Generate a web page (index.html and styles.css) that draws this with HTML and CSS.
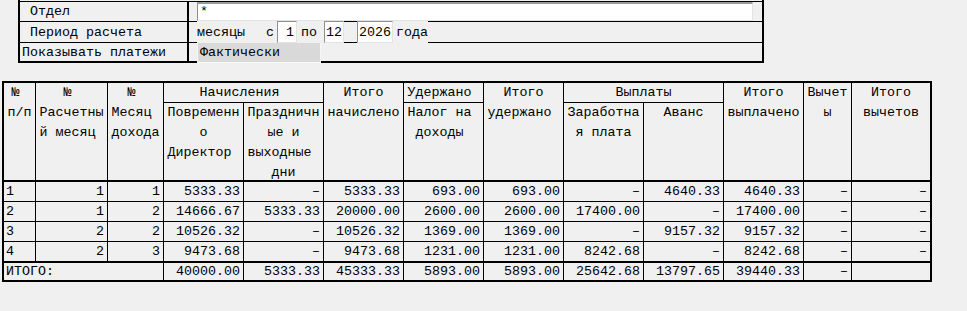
FILE: index.html
```html
<!DOCTYPE html>
<html lang="ru">
<head>
<meta charset="utf-8">
<title>Расчет</title>
<link rel="stylesheet" href="styles.css">
</head>
<body>
<div class="page">
  <div class="form">
    <div class="frow frow-dept">
      <div class="flabel"> Отдел</div>
      <div class="fval"><div class="field field-wide">*</div></div>
    </div>
    <div class="frow frow-period">
      <div class="flabel"> Период расчета</div>
      <div class="fval fval-period">
        <span class="lbl lbl-months">месяцы<span class="sp-c">с</span></span>
        <span class="field field-num field-from">1</span>
        <span class="lbl lbl-to">по</span>
        <span class="field field-num field-till">12</span>
        <span class="field field-num field-year">2026</span>
        <span class="lbl lbl-year">года</span>
      </div>
    </div>
    <div class="frow frow-pay">
      <div class="flabel flabel-flush">Показывать платежи</div>
      <div class="fval"><div class="select">Фактически</div></div>
    </div>
  </div>

  <table class="report">
    <colgroup>
      <col class="w1"><col class="w2"><col class="w3">
      <col class="w80"><col class="w80"><col class="w80"><col class="w80"><col class="w80">
      <col class="w80"><col class="w80"><col class="w80">
      <col class="w12"><col class="w13">
    </colgroup>
    <thead>
      <tr class="hr1">
        <th rowspan="2" class="hs">№ <br>п/п</th>
        <th rowspan="2" class="hs">№ <br>Расчетны<br>й месяц </th>
        <th rowspan="2" class="hs">№ <br>Месяц <br>дохода</th>
        <th colspan="2" class="grp">Начисления </th>
        <th rowspan="2" class="hs">Итого<br>начислено</th>
        <th class="grp">Удержано </th>
        <th rowspan="2" class="hs">Итого<br>удержано </th>
        <th colspan="2" class="grp">Выплаты</th>
        <th rowspan="2" class="hs">Итого<br>выплачено</th>
        <th rowspan="2" class="hs">Вычет<br>ы</th>
        <th rowspan="2" class="hs last">Итого<br>вычетов</th>
      </tr>
      <tr class="hr2">
        <th class="sub"><div class="hbox">Повременн<br>о<br>Директор </div></th>
        <th class="sub"><div class="hbox">Праздничн<br>ые и<br>выходные <br>дни</div></th>
        <th class="sub"><div class="hbox">Налог на <br>доходы </div></th>
        <th class="sub"><div class="hbox">Заработна<br>я плата</div></th>
        <th class="sub"><div class="hbox">Аванс</div></th>
      </tr>
    </thead>
    <tbody>
      <tr>
        <td class="l">1</td><td>1</td><td>1</td><td>5333.33</td><td>–</td><td>5333.33</td><td>693.00</td><td>693.00</td><td>–</td><td>4640.33</td><td>4640.33</td><td>–</td><td class="last">–</td>
      </tr>
      <tr>
        <td class="l">2</td><td>1</td><td>2</td><td>14666.67</td><td>5333.33</td><td>20000.00</td><td>2600.00</td><td>2600.00</td><td>17400.00</td><td>–</td><td>17400.00</td><td>–</td><td class="last">–</td>
      </tr>
      <tr>
        <td class="l">3</td><td>2</td><td>2</td><td>10526.32</td><td>–</td><td>10526.32</td><td>1369.00</td><td>1369.00</td><td>–</td><td>9157.32</td><td>9157.32</td><td>–</td><td class="last">–</td>
      </tr>
      <tr class="row-end">
        <td class="l">4</td><td>2</td><td>3</td><td>9473.68</td><td>–</td><td>9473.68</td><td>1231.00</td><td>1231.00</td><td>8242.68</td><td>–</td><td>8242.68</td><td>–</td><td class="last">–</td>
      </tr>
      <tr class="row-total">
        <td colspan="3" class="l">ИТОГО:</td><td>40000.00</td><td>5333.33</td><td>45333.33</td><td>5893.00</td><td>5893.00</td><td>25642.68</td><td>13797.65</td><td>39440.33</td><td>–</td><td class="last"></td>
      </tr>
    </tbody>
  </table>
</div>
</body>
</html>
```

FILE: styles.css
```css
html, body {
  margin: 0;
  background: #f0f0f0;
}

body {
  font-family: "Liberation Mono", "Courier New", monospace;
  font-size: 13.33px;
  color: #000;
}

.page {
  padding-left: 2px;
}

/* ---------- top parameter form ---------- */
.form {
  margin-left: 16px;
  width: 746px;
  box-sizing: border-box;
  border: 2px solid #000;
  border-top: 0;
  padding-top: 1px;
}

.frow {
  display: grid;
  grid-template-columns: 169px 1fr;
  box-sizing: border-box;
  border-top: 1px solid #000;
}

.frow-dept { height: 20px; }
.frow-period { height: 21px; }
.frow-pay { height: 19px; }

.flabel {
  border-right: 2px solid #000;
  padding-left: 2px;
  white-space: pre;
  display: flex;
  align-items: center;
}

.fval {
  display: flex;
  align-items: stretch;
  padding: 0 9px 0 8px;
  min-width: 0;
}

.field {
  box-sizing: border-box;
  background: #fff;
  border-top: 1px solid #8e8e8e;
  border-left: 1px solid #8e8e8e;
  border-right: 1px solid #e3e3e3;
  border-bottom: 1px solid #e3e3e3;
  display: flex;
  align-items: center;
  white-space: pre;
}

.field-wide {
  flex: 1;
  border-top: 2px solid #9a9a9a;
  padding-left: 2px;
  align-items: flex-start;
  line-height: 16px;
}

.fval-period {
  align-items: stretch;
}

.fval-period > * {
  position: relative;
  margin: -1px 0 -1px;
}

.lbl {
  background: #f0f0f0;
  display: flex;
  align-items: center;
  white-space: pre;
}

.sp-c { margin-left: 21px; }
.lbl-months { padding-right: 3px; }
.lbl-to { padding: 0 7px 0 4px; }
.lbl-year { padding-left: 3px; }

.field-num { padding: 0 1px; }
.field-from { width: 20px; justify-content: flex-end; padding-right: 2px; }
.field-till { width: 20px; }
.field-year { width: 36px; margin-left: 13px; }

.select {
  box-sizing: border-box;
  width: 124px;
  margin: -1px 0 -2px;
  background: #d9d9d9;
  border: 1px solid #f6f6f6;
  border-bottom-color: #fbfbfb;
  padding-left: 2px;
  display: flex;
  align-items: center;
}

/* ---------- report table ---------- */
.report {
  margin-top: 18px;
  width: 930px;
  box-sizing: border-box;
  table-layout: fixed;
  border-collapse: separate;
  border-spacing: 0;
  border: 2px solid #000;
  font-size: 13.33px;
}

.w1 { width: 32px; }
.w2 { width: 72px; }
.w3 { width: 56px; }
.w80 { width: 80px; }
.w12 { width: 48px; }
.w13 { width: 78px; }

.report th,
.report td {
  padding: 0;
  box-sizing: border-box;
  border-right: 1px solid #000;
  border-bottom: 1px solid #000;
  font-weight: normal;
}

.report .last { border-right: 0; }

.report th {
  vertical-align: top;
  text-align: center;
  white-space: pre;
  line-height: 20px;
}

.report .hs { border-bottom-width: 2px; }
.report .grp { line-height: 19px; }
.report .sub { border-bottom-width: 2px; }

.hbox { height: 77px; }

.report td {
  text-align: right;
  padding: 0 3px;
  line-height: 19px;
  white-space: pre;
  vertical-align: middle;
}

.report td.l {
  text-align: left;
  padding-left: 2px;
}

.row-end td { border-bottom-width: 2px; }

.row-total td {
  border-bottom: 0;
  line-height: 17px;
}
```
